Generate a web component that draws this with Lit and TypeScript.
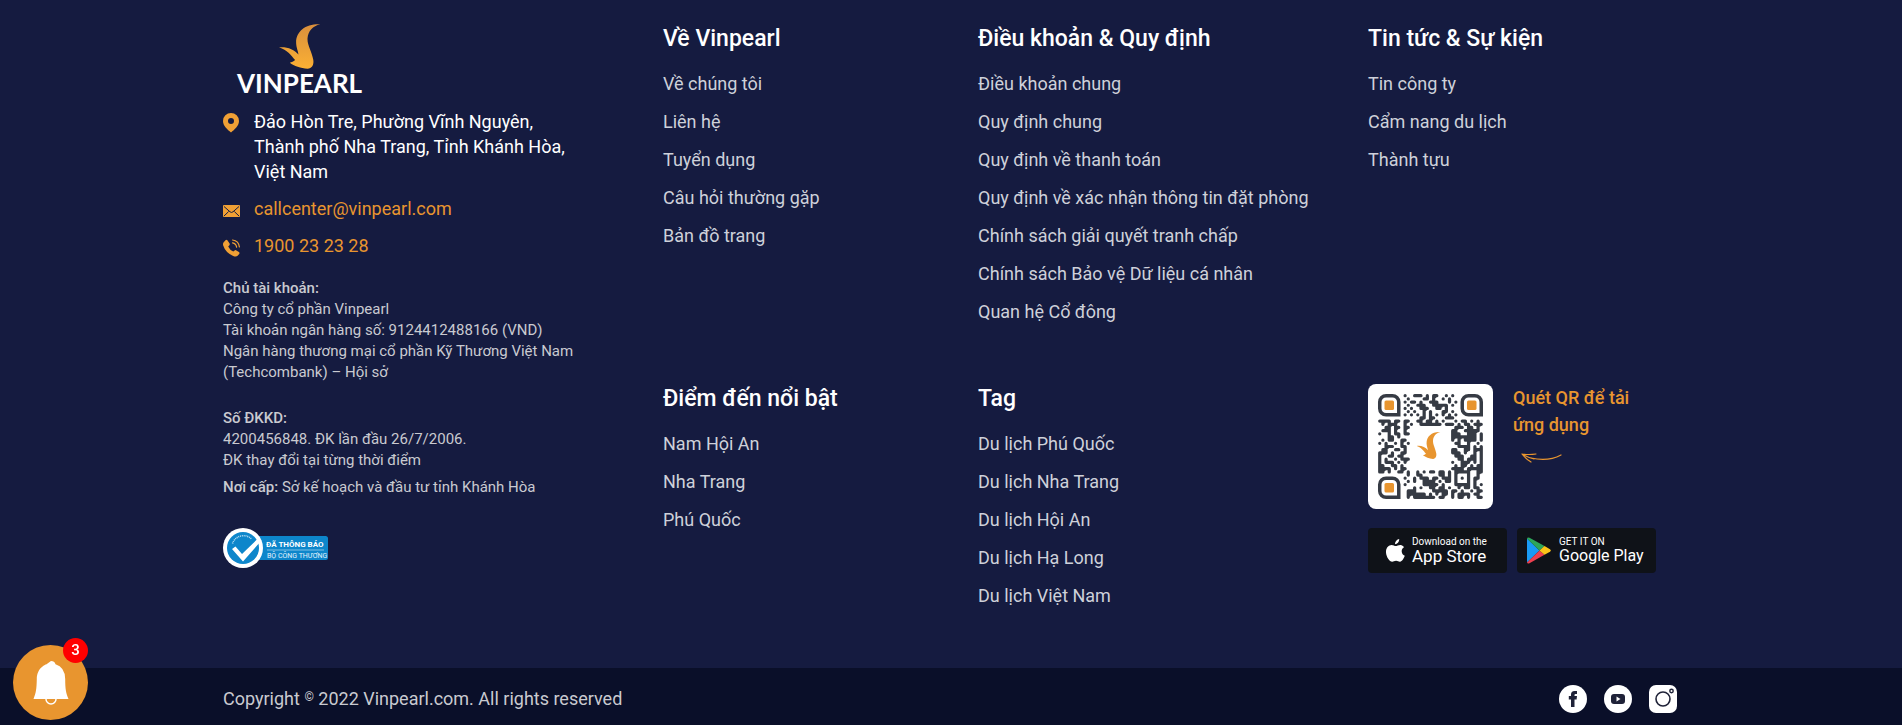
import { LitElement, html, css, svg } from "lit";
import { customElement, property } from "lit/decorators.js";

const SWOOSH =
  "M123 0C80 -2 50 20 51 55C52 70 57 77 58 88C45 73 25 65 0 67C25 75 35 90 48 104C43 108 38 111 32 112C45 121 65 129 85 129C100 128 104 115 102 103C98 80 83 60 85 40C87 20 100 5 123 0Z";

@customElement("link-group")
class LinkGroup extends LitElement {
  @property() heading = "";
  @property({ attribute: false }) links: string[] = [];

  static styles = css`
    :host { display: block; }
    h2 { margin: 0 0 17px; font-size: 23px; line-height: 30px; font-weight: 500; color: #fff; }
    ul { list-style: none; margin: 0; padding: 0; display: grid; gap: 12px; }
    li { line-height: 26px; font-size: 18px; }
    a { color: #ced1da; text-decoration: none; }
    a:hover { color: #e8952f; }
  `;

  render() {
    return html`<h2>${this.heading}</h2>
      <ul>
        ${this.links.map((l) => html`<li><a href="#">${l}</a></li>`)}
      </ul>`;
  }
}

const QR_ROWS = [
  "        #..###.#.##..#.#.        ",
  "        .#....##.#..#.#..        ",
  "        #.##.#..###...#.#        ",
  "        .#..###..#####.#.        ",
  "        #.#..###..##.#...        ",
  "        .#.#..#.#...##.#.        ",
  "        #.#.#.#.#.#.#.#.#        ",
  "        .....##.##...###.        ",
  "####.##.##..##.##.#.#...#.##.#.#.",
  ".#.###..#.#..#######.###.#.##.###",
  "..##.##.##             .###.##.#.",
  ".###.#..#.             ##..#####.",
  "#..#.##.##             ###..###.#",
  "...##.#...             ########.#",
  ".#.##..##.             #.#.####.#",
  "#.#..#.#.#             .##..#..#.",
  "..###..##.             ..####.#.#",
  ".##..##.#.             ##..##.###",
  "###.#..##.             ###.#..#.#",
  "#..##.##..             .###..##.#",
  "#.#..#.###             ..##.###.#",
  "#.###.#.#.             #..###.#.#",
  "##..##.#..             .#.##.#.##",
  "####.#.##.             ####.#####",
  "##.#..##.#..#.#.##.##.#.#####..##",
  "        .#..##.....##.#.#...#..#.",
  "        #..#.###.##.###.#.#.#.##.",
  "        .#.#..####.#.##.#...#.#..",
  "        #.....#####.#...#####.#.#",
  "        ...#.#..##.##.#..#.##.##.",
  "        .###.....#####.##.#..#.##",
  "        .######.#.#.##.#.####.##.",
  "        .#.#######.##..#.##.#..##",
];

const FINDER = "M2.5 .5h2a2 2 0 0 1 2 2v4h-4a2 2 0 0 1-2-2v-2a2 2 0 0 1 2-2z";

@customElement("qr-code")
class QrCode extends LitElement {
  static styles = css`
    :host { display: block; width: 125px; height: 125px; background: #fff; border-radius: 8px; }
    svg { display: block; width: 100%; height: 100%; }
  `;

  private get modules() {
    const on = (r: number, c: number) => QR_ROWS[r]?.[c] === "#";
    let d = "";
    for (let r = 0; r < 33; r++)
      for (let c = 0; c < 33; c++) {
        if (!on(r, c)) continue;
        d += `M${c} ${r}h0`;
        if (on(r, c + 1)) d += "h1";
        if (on(r + 1, c)) d += `M${c} ${r}v1`;
        if (on(r, c + 1) && on(r + 1, c)) d += `M${c + 0.3} ${r + 0.3}h0.1`;
      }
    return d;
  }

  private finder(x: number, y: number) {
    return svg`<g transform="translate(${x} ${y})">
      <path d=${FINDER} fill="none" stroke="#363b44" stroke-width="1.1"/>
      <rect x="2" y="2" width="3" height="3" rx=".5" fill="#e8952f"/></g>`;
  }

  render() {
    return html`<svg viewBox="-3.2 -3.2 39.4 39.4" role="img" aria-label="QR">
      <path d=${this.modules} transform="translate(.5 .5)" fill="none" stroke="#363b44"
        stroke-width="1.02" stroke-linecap="round" stroke-linejoin="round" />
      ${this.finder(0, 0)} ${this.finder(26, 0)} ${this.finder(0, 26)}
      <path d=${SWOOSH} transform="translate(12.2 11.9) scale(.06 .066)" fill="#e8952f" />
    </svg>`;
  }
}

@customElement("app-root")
class AppRoot extends LitElement {
  static styles = css`
    :host {
      display: block;
      background: #151b40;
      color: #fff;
      font-family: Roboto, "Liberation Sans", sans-serif;
      font-size: 18px;
    }
    svg { display: block; }
    a { text-decoration: none; color: inherit; }
    p { margin: 0; }
    .wrap { max-width: 1456px; margin: 0 auto; }
    .main {
      display: grid;
      grid-template-columns: 440fr 315fr 390fr 311fr;
      row-gap: 59px;
      padding: 24px 0 59px;
      align-items: start;
    }
    .company { grid-row: span 2; padding-right: 76px; }
    .logo { display: inline-flex; flex-direction: column; align-items: center; margin: 0 0 12px 14px; }
    .logo svg { width: 42px; height: 45px; }
    .word { font: 700 26px/28px Lato, sans-serif; color: #fff; }
    .contact { list-style: none; margin: 0 0 20px; padding: 0; display: grid; gap: 12px; }
    .contact li { display: grid; grid-template-columns: 17px 1fr; column-gap: 14px; line-height: 25px; }
    .contact svg { width: 17px; margin-top: 4px; }
    .contact a { color: #e8952f; }
    .info { font-size: 15px; line-height: 21px; color: #c9cad0; display: grid; gap: 25px; }
    b { font-weight: 500; }
    .issuer { margin-top: 6px; }
    .notice { display: inline-block; margin-top: 30px; }
    .app { display: grid; gap: 19px; }
    .scan { display: flex; gap: 20px; }
    .scan p { color: #e8952f; font-weight: 500; line-height: 27px; }
    .hint { display: grid; gap: 13px; align-content: start; }
    .hint svg { margin-left: 8px; }
    .stores { display: flex; gap: 10px; }
    .store {
      display: flex; align-items: center; width: 139px; height: 45px; box-sizing: border-box;
      background: #0f1218; border-radius: 4px; color: #fff; gap: 7px; padding-left: 18px;
    }
    .play { padding-left: 10px; gap: 8px; }
    .store small { display: block; font-size: 10px; line-height: 10px; }
    .store strong { display: block; font-weight: 400; font-size: 17px; line-height: 18px; white-space: nowrap; }
    .play strong { font-size: 16px; }
    .bar { background: #0a0f29; color: #c9cad0; }
    .bar .wrap { display: flex; justify-content: space-between; align-items: center; padding: 15px 0 10px; line-height: 32px; }
    .social { display: flex; gap: 17px; padding-right: 2px; }
    sup { font-size: 12px; line-height: 0; vertical-align: 4px; }
    .bell {
      position: fixed; left: 13px; bottom: 5px; width: 75px; height: 75px; padding: 0;
      border: 0; border-radius: 50%; background: #e8952f; display: grid; place-items: center;
      font: inherit; color: #fff; cursor: pointer;
    }
    .count {
      position: absolute; top: -7px; right: 0; width: 25px; height: 25px; border-radius: 50%;
      background: #f00; font-size: 15px; font-weight: 500; line-height: 25px;
    }
  `;

  render() {
    return html`
      <footer>
        <div class="wrap main">
          <section class="company">
            <a class="logo" href="#">
              <svg viewBox="0 -1 125 131" preserveAspectRatio="none">
                <defs><linearGradient id="gold" x1="0" y1="0" x2="0" y2="1">
                  <stop offset="0" stop-color="#d98f3c" /><stop offset="1" stop-color="#fbb034" />
                </linearGradient></defs>
                <path d=${SWOOSH} fill="url(#gold)" />
              </svg>
              <span class="word">VINPEARL</span>
            </a>
            <ul class="contact">
              <li>
                <svg viewBox="0 0 17 20" height="20"><path fill="#f0a035" fill-rule="evenodd" d="M8 0a8 8 0 0 1 8 8c0 5-4.500 8.500-8 11.500C4.500 16.500 0 13 0 8a8 8 0 0 1 8-8zm0 5a3 3 0 1 0 0 6 3 3 0 0 0 0-6z" /></svg>
                <span>Đảo Hòn Tre, Phường Vĩnh Nguyên, Thành phố Nha Trang, Tỉnh Khánh Hòa, Việt Nam</span>
              </li>
              <li>
                <svg viewBox="0 0 17 20" height="20"><rect y="5" width="17" height="12" rx="1" fill="#f0a035" /><path d="M1 6.500l6 5.300a2.300 2.300 0 0 0 3 0l6-5.300M1 16l4.700-4.500M16 16l-4.700-4.500" fill="none" stroke="#151b40" stroke-width="1" /></svg>
                <a href="mailto:callcenter@vinpearl.com">callcenter@vinpearl.com</a>
              </li>
              <li>
                <svg viewBox="0 0 17 20" height="20"><path fill="#f0a035" d="M.5 5.500L2.500 3.200q1-.8 1.900.1L6.600 6.600q.5 1-.4 1.900l-1 1.100q1.600 3.500 5.100 5l1.300-1.100q.9-.7 1.800-.1l2.500 1.600q1.100.9.300 1.900l-1.600 1.800q-1.500 1.300-4.400.2Q2.500 15.700.2 8.500-.3 6.700.5 5.500z" /><path d="M9.500 5.800q3.600.7 4.100 4.300M9.500 3q6.300.9 6.900 7" fill="none" stroke="#f0a035" stroke-width="1.200" stroke-linecap="round" /></svg>
                <a href="tel:1900232328">1900 23 23 28</a>
              </li>
            </ul>
            <div class="info">
              <p><b>Chủ tài khoản:</b><br />Công ty cổ phần Vinpearl<br />Tài khoản ngân hàng số: 9124412488166 (VND)<br />Ngân hàng thương mại cổ phần Kỹ Thương Việt Nam (Techcombank) – Hội sở</p>
              <div>
                <p><b>Số ĐKKD:</b><br />4200456848. ĐK lần đầu 26/7/2006.<br />ĐK thay đổi tại từng thời điểm</p>
                <p class="issuer"><b>Nơi cấp:</b> Sở kế hoạch và đầu tư tỉnh Khánh Hòa</p>
              </div>
            </div>
            <a class="notice" href="#">
              <svg width="106" height="40" viewBox="0 0 106 40">
                <rect x="28" y="8" width="77" height="24" rx="2.500" fill="#0d86cb" />
                <circle cx="20" cy="20" r="20" fill="#fff" />
                <circle cx="20" cy="20" r="16" fill="#0d86cb" />
                <path d="M9.500 15.500a11.500 11.500 0 0 1 19-4.500" fill="none" stroke="#b9def2" stroke-width="1.500" stroke-dasharray="1 .8" />
                <path d="M9 21l3.500-2.500 6.500 7.500 17-16.500 1.500 4L20 33.500z" fill="#fff" />
                <path d="M44 22h57" stroke="#9fd0ec" stroke-width=".8" />
                <text x="43" y="19" font-size="8" font-weight="700" fill="#fff">ĐÃ THÔNG BÁO</text>
                <text x="44" y="30" font-size="7" fill="#e3f2fb">BỘ CÔNG THƯƠNG</text>
              </svg>
            </a>
          </section>

          <link-group heading="Về Vinpearl" .links=${["Về chúng tôi", "Liên hệ", "Tuyển dụng", "Câu hỏi thường gặp", "Bản đồ trang"]}></link-group>
          <link-group heading="Điều khoản & Quy định" .links=${["Điều khoản chung", "Quy định chung", "Quy định về thanh toán", "Quy định về xác nhận thông tin đặt phòng", "Chính sách giải quyết tranh chấp", "Chính sách Bảo vệ Dữ liệu cá nhân", "Quan hệ Cổ đông"]}></link-group>
          <link-group heading="Tin tức & Sự kiện" .links=${["Tin công ty", "Cẩm nang du lịch", "Thành tựu"]}></link-group>
          <link-group heading="Điểm đến nổi bật" .links=${["Nam Hội An", "Nha Trang", "Phú Quốc"]}></link-group>
          <link-group heading="Tag" .links=${["Du lịch Phú Quốc", "Du lịch Nha Trang", "Du lịch Hội An", "Du lịch Hạ Long", "Du lịch Việt Nam"]}></link-group>

          <section class="app">
            <div class="scan">
              <qr-code></qr-code>
              <div class="hint">
                <p>Quét QR để tải<br />ứng dụng</p>
                <svg width="41" height="14" viewBox="0 0 41 14" fill="none" stroke="#e8952f" stroke-width="1.200" stroke-linecap="round" stroke-linejoin="round"><path d="M40 4Q27 11 10 7M15 3Q8 4 1 3Q5 8 10 11M1 3q7 4 12 5" /></svg>
              </div>
            </div>
            <div class="stores">
              <a class="store" href="#">
                <svg width="19" height="24" viewBox="0 0 19 24" fill="#fff"><path d="M13.200 0c.2 2.800-1.800 5-4.200 5.200C8.800 2.800 10.900.4 13.200 0zM18 8.300c-3.400 2-3 7 .8 8.500-1 2.700-2.800 5.800-4.800 5.900-1.500.1-2-.9-3.900-.9s-2.500.9-3.900.9C3.500 22.700.3 18 0 13.500-.3 8.800 2.500 6 5.600 5.900c1.700 0 3 1.100 4.200 1.100 1.100 0 2.700-1.200 4.800-1.100 1.300.1 2.600.8 3.400 2.400z" /></svg>
                <span><small>Download on the</small><strong>App Store</strong></span>
              </a>
              <a class="store play" href="#">
                <svg width="24" height="27" viewBox="0 0 24 27"><path d="M0 1.500v24L12.500 13.500z" fill="#1a9bf5" /><path d="M0 1.500Q.5-.3 2.500.8L17.500 9l-5 4.500z" fill="#2da65a" /><path d="M0 25.500q.5 1.700 2.500.7l15-8.400-5-4.300z" fill="#ee4050" /><path d="M17.500 9l5.500 3.200q1.700 1.300 0 2.500l-5.500 3.100-5-4.300z" fill="#fcc418" /></svg>
                <span><small>GET IT ON</small><strong>Google Play</strong></span>
              </a>
            </div>
          </section>
        </div>
        <div class="bar">
          <div class="wrap">
            <span>Copyright <sup>©</sup> 2022 Vinpearl.com. All rights reserved</span>
            <nav class="social">
              <a href="#" aria-label="Facebook"><svg width="28" height="28" viewBox="0 0 28 28"><circle cx="14" cy="14" r="14" fill="#fff" /><path d="M12 22v-7.500H9.800v-3.400H12V9.500q0-3.500 3.500-3.500H18v3.100h-1.500q-1 0-1 1v1H18l-.4 3.400h-2.100V22z" fill="#1f2238" /></svg></a>
              <a href="#" aria-label="YouTube"><svg width="28" height="28" viewBox="0 0 28 28"><circle cx="14" cy="14" r="14" fill="#fff" /><rect x="7" y="9" width="14" height="10" rx="3" fill="#1f2238" /><path d="M12.500 11.500v5l4-2.500z" fill="#fff" /></svg></a>
              <a href="#" aria-label="Instagram"><svg width="28" height="28" viewBox="0 0 28 28"><rect width="28" height="28" rx="7" fill="#fff" /><circle cx="14" cy="14" r="7" fill="none" stroke="#1f2238" stroke-width="1.600" /><circle cx="22.500" cy="6" r="1.700" fill="none" stroke="#1f2238" stroke-width="1.400" /></svg></a>
            </nav>
          </div>
        </div>
      </footer>
      <button class="bell" aria-label="3">
        <svg width="36" height="44" viewBox="0 0 36 44"><circle cx="18" cy="38" r="5" fill="none" stroke="#fff" stroke-width="1.500" /><path d="M18 0q3.500 0 4.500 3.200Q32 6 32.200 18c0 10 .8 14 3.300 20H.5C3 32 3.600 28 3.800 18 4 6 13.500 3.200 13.500 3.200 14.500 0 18 0z" fill="#fff" /></svg>
        <span class="count">3</span>
      </button>
    `;
  }
}
